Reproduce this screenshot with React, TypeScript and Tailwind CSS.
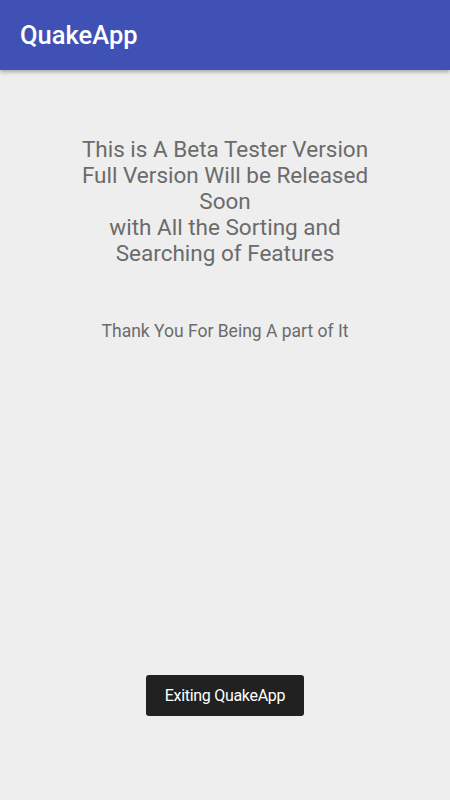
export default function App() {
  return (
    <main className="flex h-[800px] w-[450px] flex-col bg-[#eeeeee] font-['Roboto',sans-serif]">
      {/* Toolbar */}
      <header className="flex h-[70px] items-center bg-[#3f51b5] px-[20px] shadow-[0_2px_4px_rgba(0,0,0,0.3)]">
        <h1 className="text-[25.5px] font-medium text-white">QuakeApp</h1>
      </header>

      <section className="flex flex-1 flex-col items-center pt-[66px]">
        <p className="text-center text-[22.5px] leading-[26px] text-[#6b6b6b]">
          This is A Beta Tester Version
          <br />
          Full Version Will be Released
          <br />
          Soon
          <br />
          with All the Sorting and
          <br />
          Searching of Features
        </p>
        <p className="mt-[54px] text-center text-[17.5px] leading-[22px] text-[#6b6b6b]">
          Thank You For Being A part of It
        </p>

        {/* Toast */}
        <div className="mt-auto mb-[84px] flex h-[41px] w-[158px] items-center justify-center rounded-[3px] bg-[#212121] text-[16px] tracking-[-0.3px] text-white">
          Exiting QuakeApp
        </div>
      </section>
    </main>
  );
}
